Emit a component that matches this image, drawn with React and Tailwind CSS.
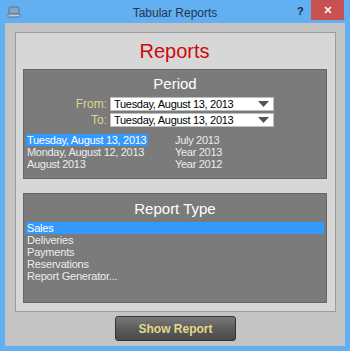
const font = { fontFamily: '"Liberation Sans", Arial, sans-serif' }

function Select({ value }) {
  return (
    <div className="flex items-center h-[14px] w-[164px] bg-white border border-[#bdbdbd] pl-[3px] pr-[4px]">
      <span className="flex-1 text-[11px] leading-none text-black tracking-[-0.3px] whitespace-nowrap">{value}</span>
      <svg width="11" height="6" viewBox="0 0 11 6"><path d="M0 0h11L5.5 6z" fill="#555" /></svg>
    </div>
  )
}

const REPORT_TYPES = ['Sales', 'Deliveries', 'Payments', 'Reservations', 'Report Generator...']

export default function App() {
  return (
    <div className="w-[350px] h-[351px] bg-[#62aff2] flex flex-col select-none" style={font}>
      {/* Title bar */}
      <div className="h-[23px] flex items-center relative">
        <svg className="ml-[7px]" width="14" height="14" viewBox="0 0 14 14">
          <rect x="2" y="2" width="10" height="7" rx="1" fill="#8aa4bf" stroke="#5a7390" strokeWidth="1" />
          <rect x="1" y="9" width="12" height="3" rx="1" fill="#b9c9da" stroke="#5a7390" strokeWidth="1" />
        </svg>
        <div className="absolute left-0 right-0 top-[4px] text-center text-[12px] text-[#24364a]">Tabular Reports</div>
        <span className="absolute left-[297px] top-[3px] text-[11px] font-bold text-[#1b2b3b]">?</span>
        <div className="absolute left-[311px] top-0 w-[33px] h-[20px] bg-[#c75050] flex items-center justify-center">
          <svg width="8" height="8" viewBox="0 0 8 8"><path d="M1 1l6 6M7 1l-6 6" stroke="#fff" strokeWidth="1.6" /></svg>
        </div>
      </div>

      {/* Body */}
      <div className="flex-1 mx-[5px] mb-[5px] bg-[#c4c4c4] flex flex-col pt-[9px] pl-[10px]">
        <div className="w-[321px] h-[280px] bg-[#d7d7d7] border border-[#9c9c9c] pl-[7px] flex flex-col">
          <div className="h-[36px] text-center text-[20px] text-[#cc0a0a] pr-[9px] pt-[8px] leading-none">Reports</div>

          {/* Period */}
          <div className="w-[304px] h-[110px] bg-[#7b7b7b] border border-[#666] flex flex-col">
            <div className="text-center text-[15px] text-white pt-[5px] leading-[18px]">Period</div>
            <div className="flex items-center mt-[4px] leading-[14px]">
              <span className="w-[86px] text-right text-[12px] text-[#ddd48a] pr-[3px]">From:</span>
              <Select value="Tuesday, August 13, 2013" />
            </div>
            <div className="flex items-center mt-[2px] leading-[14px]">
              <span className="w-[86px] text-right text-[12px] text-[#ddd48a] pr-[3px]">To:</span>
              <Select value="Tuesday, August 13, 2013" />
            </div>
            <div className="flex mt-[7px] pl-[2px] text-[11px] leading-[12px] text-[#ececec] tracking-[-0.3px] whitespace-nowrap">
              <div className="w-[149px] flex flex-col items-start">
                <span className="bg-[#3399ff] text-white pl-[1px] pr-[2px]">Tuesday, August 13, 2013</span>
                <span className="pl-[1px]">Monday, August 12, 2013</span>
                <span className="pl-[1px]">August 2013</span>
              </div>
              <div className="flex flex-col">
                <span>July 2013</span>
                <span>Year 2013</span>
                <span>Year 2012</span>
              </div>
            </div>
          </div>

          <div className="h-[14px]" />

          {/* Report type */}
          <div className="w-[304px] h-[110px] bg-[#7b7b7b] border border-[#666] flex flex-col">
            <div className="text-center text-[15px] text-white pt-[6px] leading-[18px]">Report Type</div>
            <div className="flex flex-col mt-[4px] px-[2px] text-[11px] leading-[12px] text-[#ececec] tracking-[-0.2px] whitespace-nowrap">
              {REPORT_TYPES.map((t, i) => (
                <span key={t} className={i === 0 ? 'bg-[#3399ff] text-white pl-[1px]' : 'pl-[1px]'}>{t}</span>
              ))}
            </div>
          </div>
        </div>

        <div className="flex justify-center w-[321px] mt-[4px]">
          <button className="w-[121px] h-[25px] rounded-[3px] border border-[#333] bg-gradient-to-b from-[#7a7a7a] via-[#5c5c5c] to-[#4a4a4a] text-[12px] font-bold text-[#e3d98a]">
            Show Report
          </button>
        </div>
      </div>
    </div>
  )
}
